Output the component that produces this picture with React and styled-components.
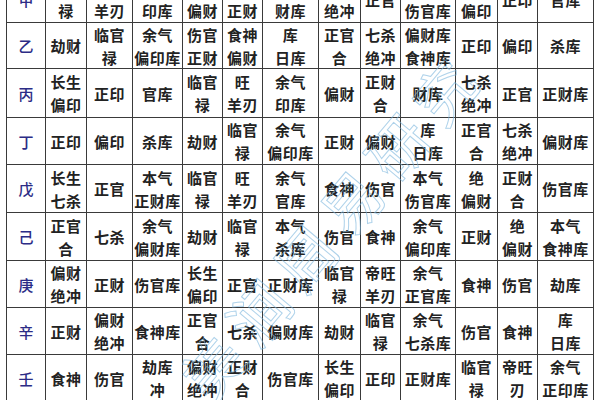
import React from 'react';
import styled, { createGlobalStyle } from 'styled-components';

const GlobalStyle = createGlobalStyle`
  html, body {
    margin: 0;
    padding: 0;
    background: #ffffff;
    overflow: hidden;
  }
  body {
    font-family: "Noto Sans CJK SC", "Noto Sans", sans-serif;
  }
`;

const Page = styled.div`
  position: relative;
  width: 600px;
  height: 400px;
  overflow: hidden;
  padding-left: 6px;
  box-sizing: border-box;
`;

const Grid = styled.div`
  display: grid;
  grid-template-columns: 39px 41px 46px 50px 40px 40px 56px 42px 40px 55px 42px 40px 56px;
  grid-template-rows: 47px 46px 49px 47px 48px 48px 47px 47px 47px;
  margin-top: -24px;
  border-left: 1.5px solid #3a3a3a;
  width: max-content;
`;

const Cell = styled.div`
  box-sizing: border-box;
  border-right: 1.5px solid #3a3a3a;
  border-bottom: 1.5px solid #3a3a3a;
  display: flex;
  align-items: center;
  justify-content: center;
  text-align: center;
  white-space: pre-line;
  font-size: 15px;
  line-height: 23px;
  font-weight: ${p => (p.stem ? 500 : 700)};
  color: ${p => (p.stem ? '#2c2c86' : '#222222')};
  letter-spacing: ${p => (p.stem ? '0' : '0.5px')};
`;

const Watermark = styled.div`
  position: absolute;
  left: 95px;
  top: 180px;
  width: 470px;
  text-align: center;
  font-family: "Noto Sans CJK SC", sans-serif;
  font-size: 60px;
  font-weight: 400;
  letter-spacing: 12px;
  color: transparent;
  -webkit-text-stroke: 1px rgba(120, 180, 220, 0.6);
  transform: rotate(-50deg);
  transform-origin: center;
  pointer-events: none;
  white-space: nowrap;
`;

const rows = [
  ['甲', '临官\n禄', '帝旺\n羊刃', '余气\n印库', '食神\n偏财', '伤官\n正财', '库\n财库', '七杀\n绝冲', '正官', '本气\n伤官库', '长生\n偏印', '正印', '官库'],
  ['乙', '劫财', '临官\n禄', '余气\n偏印库', '伤官\n正财', '食神\n偏财', '库\n日库', '正官\n合', '七杀\n绝冲', '偏财库\n食神库', '正印', '偏印', '杀库'],
  ['丙', '长生\n偏印', '正印', '官库', '临官\n禄', '旺\n羊刃', '余气\n印库', '偏财', '正财\n合', '财库', '七杀\n绝冲', '正官', '正财库'],
  ['丁', '正印', '偏印', '杀库', '劫财', '临官\n禄', '余气\n偏印库', '正财', '偏财', '库\n日库', '正官\n合', '七杀\n绝冲', '偏财库'],
  ['戊', '长生\n七杀', '正官', '本气\n正财库', '临官\n禄', '旺\n羊刃', '余气\n官库', '食神', '伤官', '本气\n伤官库', '绝\n偏财', '正财\n合', '伤官库'],
  ['己', '正官\n合', '七杀', '余气\n偏财库', '劫财', '临官\n禄', '本气\n杀库', '伤官', '食神', '余气\n偏印库', '正财', '绝\n偏财', '本气\n食神库'],
  ['庚', '偏财\n绝冲', '正财', '伤官库', '长生\n偏印', '正官', '正财库', '临官\n禄', '帝旺\n羊刃', '余气\n正官库', '食神', '伤官', '劫库'],
  ['辛', '正财', '偏财\n绝冲', '食神库', '正官\n合', '七杀', '偏财库', '劫财', '临官\n禄', '余气\n七杀库', '伤官', '食神', '库\n日库'],
  ['壬', '食神', '伤官', '劫库\n冲', '偏财\n绝冲', '正财\n合', '伤官库', '长生\n偏印', '正印', '正财库', '临官\n禄', '帝旺\n刃', '余气\n正印库'],
];

export default function App() {
  return (
    <>
      <GlobalStyle />
      <Page>
        <Grid>
          {rows.map((row, r) =>
            row.map((text, c) => (
              <Cell key={`${r}-${c}`} stem={c === 0}>
                {text}
              </Cell>
            ))
          )}
        </Grid>
        <Watermark>美涧周易研究</Watermark>
      </Page>
    </>
  );
}
